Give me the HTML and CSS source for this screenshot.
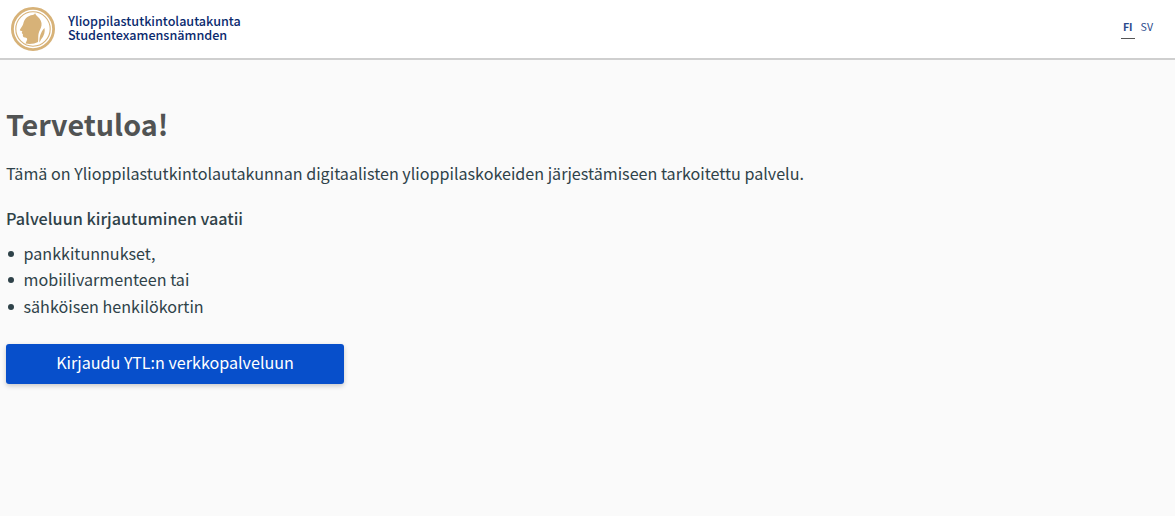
FILE: index.html
```html
<!DOCTYPE html>
<html lang="fi">
<head>
  <meta charset="UTF-8">
  <title>Ylioppilastutkintolautakunta</title>
  <link rel="stylesheet" href="styles.css">
</head>
<body>

  <div class="header">
    <a class="logo" href="#">
      <svg class="logo-mark" viewBox="0 0 44 44" width="44" height="44">
        <circle cx="22" cy="22" r="20.6" fill="none" stroke="#d7b278" stroke-width="2.8"/>
        <circle cx="22" cy="22" r="17.2" fill="none" stroke="#d7b278" stroke-width="1.1"/>
        <path fill="#d7b278" d="M24 6c.5 1.500 1.500 2.500 2.500 3.500 3 2.500 4.500 5.500 4 9-.5 3-2.500 5.500-3 8.500-.5 2.500 0 5-.5 8-3.500 2-8.500 2.500-12.500 1.500l1.500-3.500c.8-1.500-.5-2.500-2-2.500-2 0-2.500-1.500-2-3l-1-1.200c-.5-.5.300-1.300.3-2l-2.300-.8c-.8-.5 2.800-4.500 3.200-6.500 1-5 4.500-8.500 9.500-9 .8-.2 2-.5 2.300-2z"/>
        <path fill="#d7b278" d="M33.500 21c.8 3.500-.3 8-3.500 11.500l-1.500 3c-.5-4.500 1-10.500 5-14.500z"/>
      </svg>
      <span class="logo-text">Ylioppilastutkintolautakunta<br>Studentexamensnämnden</span>
    </a>
    <div class="lang">
      <a class="lang-item active" href="#">FI</a>
      <a class="lang-item" href="#">SV</a>
    </div>
  </div>

  <div class="container">
    <h1>Tervetuloa!</h1>
    <p>Tämä on Ylioppilastutkintolautakunnan digitaalisten ylioppilaskokeiden järjestämiseen tarkoitettu palvelu.</p>
    <p class="lead">Palveluun kirjautuminen vaatii</p>
    <ul>
      <li>pankkitunnukset,</li>
      <li>mobiilivarmenteen tai</li>
      <li>sähköisen henkilökortin</li>
    </ul>
    <button class="login-btn">Kirjaudu YTL:n verkkopalveluun</button>
  </div>

</body>
</html>
```

FILE: styles.css
```css
html, body {
  height: 100%;
}

body {
  font-family: "Noto Sans CJK SC", "Noto Sans", sans-serif;
  background-color: #fafafa;
  color: #2f4249;
  margin: 0;
  font-size: 16.12px;
  line-height: 27px;
}

.header {
  display: flex;
  align-items: center;
  justify-content: space-between;
  height: 58px;
  padding: 0 22px 0 11px;
  background-color: white;
  border-bottom: 2px solid #cfcfcf;
}

.logo {
  display: flex;
  align-items: center;
  gap: 13px;
  text-decoration: none;
}

.logo-text {
  color: #0a2a6e;
  font-size: 12.6px;
  font-weight: 500;
  line-height: 14px;
  padding-bottom: 2px;
}

.lang {
  display: flex;
  gap: 6px;
}

.lang-item {
  color: #2a4a8c;
  font-size: 10.6px;
  line-height: 16px;
  text-decoration: none;
  padding-bottom: 4px;
}

.lang-item.active {
  font-weight: 700;
  padding: 0 2px 3px;
  border-bottom: 1px solid #555;
}

.container {
  padding: 43px 6px 0;
}

h1 {
  font-size: 28.7px;
  font-weight: 700;
  line-height: 42px;
  color: #515353;
  margin: 0 0 15px;
}

p {
  margin: 0 0 18px;
}

.lead {
  font-size: 16.2px;
  font-weight: 500;
  margin-bottom: 7.6px;
}

ul {
  list-style: none;
  margin: 0 0 25px;
  padding: 0 0 0 2px;
}

li {
  display: flex;
  align-items: center;
  gap: 9.5px;
  line-height: 26.5px;
}

li::before {
  content: "";
  width: 6px;
  height: 6px;
  margin-top: 2px;
  border-radius: 50%;
  background-color: #2f4249;
}

.login-btn {
  display: block;
  width: 338px;
  height: 40px;
  padding: 0 0 5px;
  border: none;
  border-radius: 3px;
  background-color: #074fcb;
  color: white;
  font-family: inherit;
  font-size: 16.12px;
  cursor: pointer;
  box-shadow: 0 2px 5px rgba(0, 0, 0, 0.2);
}
```
